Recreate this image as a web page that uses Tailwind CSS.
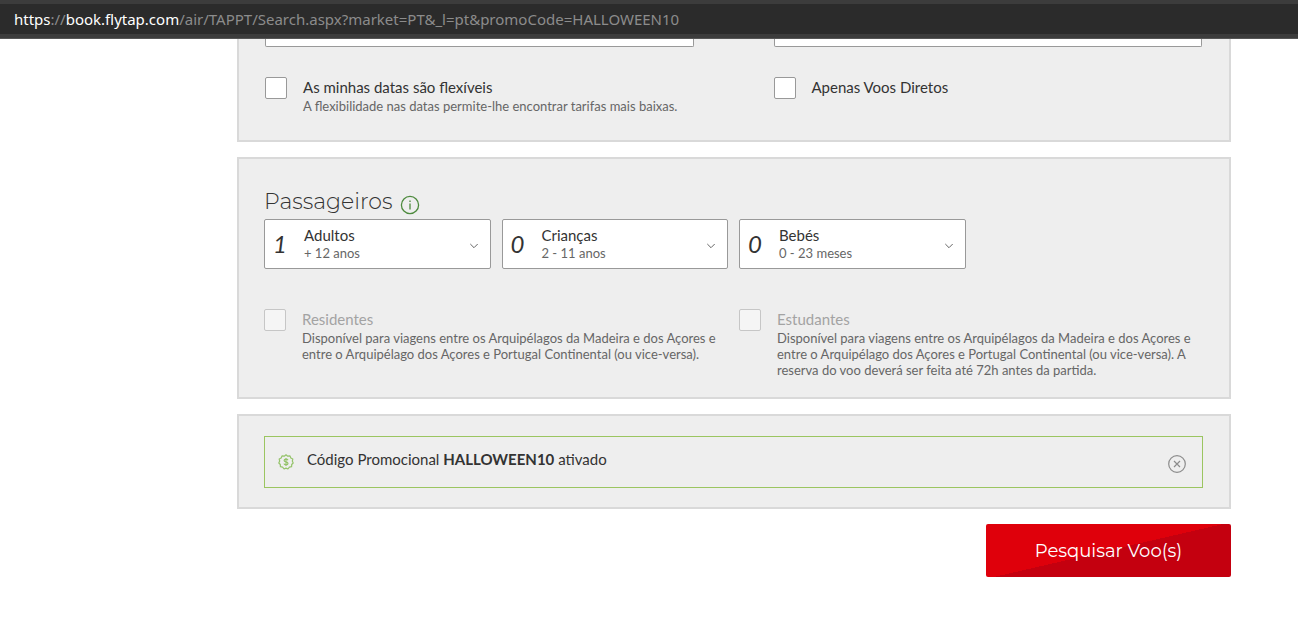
<!DOCTYPE html>
<html lang="pt">
<head>
    <meta charset="UTF-8">
    <meta name="viewport" content="width=device-width, initial-scale=1.0">
    <title>TAP - Pesquisar Voos</title>
    <script src="https://cdn.jsdelivr.net/npm/@tailwindcss/browser@4"></script>
</head>
<body class="bg-white font-['Lato',sans-serif] text-[15px] leading-5 text-[#333]">
    <!-- address bar -->
    <header class="border-b border-[#555]">
        <p class="bg-[#2b2b2b] border-y-4 border-[#3c3c3c] px-3.5 py-[5px] font-['Noto_Sans',sans-serif] text-[15px] text-[#8c8c8c] whitespace-nowrap"><span class="text-white">https</span>://<span class="text-white">book.flytap.com</span>/air/TAPPT/Search.aspx?market=PT&amp;_l=pt&amp;promoCode=HALLOWEEN10</p>
    </header>

    <main class="ml-[237px] mr-[67px] flex flex-col gap-[15px]">
        <!-- dates -->
        <section class="bg-[#eee] border-2 border-t-0 border-[#d9d9d9] pl-[26px] pr-[27px] pb-[26px]">
            <div class="grid grid-cols-2 gap-x-20">
                <input type="text" aria-label="Data de ida" class="block w-full h-2 bg-white border border-t-0 border-[#999] rounded-b-xs">
                <input type="text" aria-label="Data de volta" class="block w-full h-2 bg-white border border-t-0 border-[#999] rounded-b-xs">
            </div>
            <div class="grid grid-cols-2 gap-x-20 mt-[30px]">
                <div class="flex gap-4">
                    <input id="flexible" type="checkbox" class="appearance-none shrink-0 size-[22px] bg-white border border-[#999] rounded-xs">
                    <div>
                        <label for="flexible" class="block">As minhas datas são flexíveis</label>
                        <p class="mt-px text-[13px] leading-4 text-[#666]">A flexibilidade nas datas permite-lhe encontrar tarifas mais baixas.</p>
                    </div>
                </div>
                <div class="flex gap-4">
                    <input id="direct" type="checkbox" class="appearance-none shrink-0 size-[22px] bg-white border border-[#999] rounded-xs">
                    <label for="direct">Apenas Voos Diretos</label>
                </div>
            </div>
        </section>

        <!-- passengers -->
        <section class="bg-[#eee] border-2 border-[#d9d9d9] pl-[25px] pr-[26px] pt-7 pb-[19px]">
            <div class="flex items-end gap-[7px] pb-0.5">
                <h2 class="font-['Montserrat','Inter',sans-serif] font-light text-[22px] leading-[30px]">Passageiros</h2>
                <svg class="size-5 mb-0.5" viewBox="0 0 20 20" fill="none" stroke="#4d8a3d" stroke-width="1.3">
                    <circle cx="10" cy="10" r="8.6"/>
                    <path d="M10 8.5v6M10 5.5v1.4"/>
                </svg>
            </div>
            <div class="grid grid-cols-4 gap-[11px]">
                <div class="flex items-center h-[50px] bg-white border border-[#999] rounded-xs pl-2 pr-3">
                    <select id="adults" class="appearance-none w-[31px] text-2xl italic"><option>1</option></select>
                    <label for="adults" class="grow pb-px leading-[18px]">Adultos<span class="block mt-px text-[13px] leading-4 text-[#666]">+ 12 anos</span></label>
                    <svg class="size-2 mt-1" viewBox="0 0 8 8" fill="none" stroke="#666"><path d="M.3 2 4 5.700 7.700 2"/></svg>
                </div>
                <div class="flex items-center h-[50px] bg-white border border-[#999] rounded-xs pl-2 pr-3">
                    <select id="children" class="appearance-none w-[31px] text-2xl italic"><option>0</option></select>
                    <label for="children" class="grow pb-px leading-[18px]">Crianças<span class="block mt-px text-[13px] leading-4 text-[#666]">2 - 11 anos</span></label>
                    <svg class="size-2 mt-1" viewBox="0 0 8 8" fill="none" stroke="#666"><path d="M.3 2 4 5.700 7.700 2"/></svg>
                </div>
                <div class="flex items-center h-[50px] bg-white border border-[#999] rounded-xs pl-2 pr-3">
                    <select id="infants" class="appearance-none w-[31px] text-2xl italic"><option>0</option></select>
                    <label for="infants" class="grow pb-px leading-[18px]">Bebés<span class="block mt-px text-[13px] leading-4 text-[#666]">0 - 23 meses</span></label>
                    <svg class="size-2 mt-1" viewBox="0 0 8 8" fill="none" stroke="#666"><path d="M.3 2 4 5.700 7.700 2"/></svg>
                </div>
            </div>
            <div class="grid grid-cols-2 gap-[11px] mt-10">
                <div class="flex gap-4">
                    <input id="residents" type="checkbox" disabled class="appearance-none shrink-0 size-[22px] bg-[#f5f5f5] border border-[#c6c6c6] rounded-xs">
                    <div>
                        <label for="residents" class="block text-[#a3a3a3]">Residentes</label>
                        <p class="mt-px text-[13px] leading-4 text-[#666]">Disponível para viagens entre os Arquipélagos da Madeira e dos Açores e entre o Arquipélago dos Açores e Portugal Continental (ou vice-versa).</p>
                    </div>
                </div>
                <div class="flex gap-4">
                    <input id="students" type="checkbox" disabled class="appearance-none shrink-0 size-[22px] bg-[#f5f5f5] border border-[#c6c6c6] rounded-xs">
                    <div>
                        <label for="students" class="block text-[#a3a3a3]">Estudantes</label>
                        <p class="mt-px text-[13px] leading-4 text-[#666]">Disponível para viagens entre os Arquipélagos da Madeira e dos Açores e entre o Arquipélago dos Açores e Portugal Continental (ou vice-versa). A reserva do voo deverá ser feita até 72h antes da partida.</p>
                    </div>
                </div>
            </div>
        </section>

        <!-- promo code -->
        <section class="bg-[#eee] border-2 border-[#d9d9d9] pl-[25px] pr-[26px] pt-5 pb-[19px]">
            <div class="flex items-start h-[52px] border border-[#9bc560] pl-[13px] pr-4 pt-3">
                <svg class="size-4 mt-[5px]" viewBox="0 0 16 16" fill="none" stroke="#95c36b" stroke-width="1.2" stroke-linejoin="round">
                    <path d="M8 .8 9.700 2.200 12 1.900l.8 2.100 2 1-.5 2.100.9 1.900-1.500 1.500-.1 2.200-2.200.4L9.900 15 8 14.100 6.100 15l-1.500-1.900-2.200-.4-.1-2.200L.8 9l.9-1.900L1.200 5l2-1L4 1.900l2.300.3z"/>
                    <path d="M10 6.200C9.700 5.500 9 5.200 8 5.200c-1.100 0-1.900.5-1.900 1.300C6.100 8.500 10 7.400 10 9.500c0 .8-.8 1.300-2 1.300-1.100 0-1.800-.4-2.100-1.200M8 4v8"/>
                </svg>
                <p class="grow ml-[13px]">Código Promocional <b>HALLOWEEN10</b> ativado</p>
                <button type="button" aria-label="Remover código" class="mt-1.5">
                    <svg class="size-[18px]" viewBox="0 0 18 18" fill="none" stroke="#8c8c8c" stroke-width="1.2">
                        <circle cx="9" cy="9" r="8.300"/>
                        <path d="m6 6 6 6m0-6-6 6"/>
                    </svg>
                </button>
            </div>
        </section>

        <button type="submit" class="self-end w-[245px] h-[53px] rounded-xs text-white font-['Montserrat','Inter',sans-serif] text-lg bg-[linear-gradient(167deg,#df000b_50%,#c4000f_50%)]">Pesquisar Voo(s)</button>
    </main>
</body>
</html>
